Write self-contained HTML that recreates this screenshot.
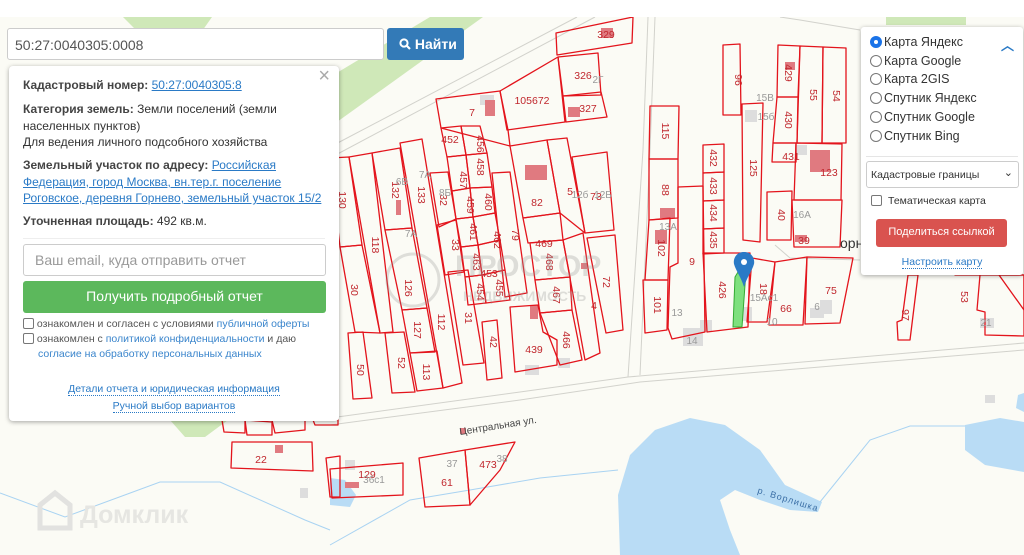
<!DOCTYPE html>
<html><head><meta charset="utf-8"><style>
*{box-sizing:border-box;margin:0;padding:0}
body{width:1024px;height:555px;overflow:hidden;position:relative;background:#fbfbf5;font-family:"Liberation Sans",sans-serif;color:#333}
#map{position:absolute;left:0;top:0}
.top{position:absolute;left:0;top:0;width:1024px;height:17px;background:#fff}
.search{position:absolute;left:7px;top:28px;width:377px;height:32px;border:1px solid #ccc;border-radius:3px;background:#fff;font-size:14px;padding:8px 7px;color:#555}
.btn{position:absolute;left:387px;top:28px;width:77px;height:32px;background:#337ab7;border-radius:3px;color:#fff;font-size:14px;font-weight:bold;padding:8px 0 0 12px}
.panel{position:absolute;left:9px;top:66px;width:330px;height:355px;background:#fff;border-radius:4px;box-shadow:0 1px 5px rgba(0,0,0,.35);font-size:12px;line-height:16.5px}
.panel b{color:#444}
.panel a{color:#2a7ac6}
.p{position:absolute;left:14px}
.rp{position:absolute;left:861px;top:27px;width:162px;height:248px;background:#fff;border-radius:3px;box-shadow:0 1px 5px rgba(0,0,0,.35);font-size:12.5px}
.r{position:absolute;left:9px;display:flex;align-items:center;color:#333}
.r i{width:12px;height:12px;border:1px solid #777;border-radius:50%;display:inline-block;margin-right:2px}
.lab{font-size:10.5px;fill:#c0272d;font-family:"Liberation Sans",sans-serif}
.gl{font-size:10px;fill:#999;font-family:"Liberation Sans",sans-serif}
</style></head><body>
<svg id="map" width="1024" height="555" viewBox="0 0 1024 555">
<g fill="#cfe8b8">
<polygon points="123,17 212,17 200,34 140,34"/>
<polygon points="330,77 430,17 483,17 330,127"/>
<polygon points="886,17 966,17 966,25 886,25"/>
<polygon points="170,420 228,420 205,437 185,437"/>
</g>
<g fill="#b9dcf5">
<path d="M620,555 L618,495 L630,455 L655,430 L690,418 L725,425 L760,450 L785,485 L822,502 L818,512 L790,510 L760,500 L735,490 L720,500 L730,530 L740,555Z"/>
<path d="M965,425 L1000,418 L1024,422 L1024,472 L985,465 L965,450Z"/>
<path d="M1018,395 L1024,393 L1024,412 L1016,408Z"/>
<path d="M330,478 L345,480 L356,495 L350,507 L330,505Z"/>
</g>
<g fill="none" stroke="#a9d3f2" stroke-width="1">
<path d="M0,493 L65,517 L160,482 L220,482 L305,520 L330,530"/>
<path d="M820,502 L870,440 L910,426 L965,426"/>
<path d="M330,545 L410,500 L470,490 L540,478 L618,470"/>
</g>
<g fill="none" stroke="#d2d2cc" stroke-width="1">
<path d="M330,147 L577,17"/><path d="M330,158 L595,17"/>
<path d="M655,17 L650,150 L640,375"/><path d="M648,17 L643,150 L628,377"/>
<path d="M330,418 L520,392 L628,377 L1024,343"/>
<path d="M330,425 L520,400 L640,382 L1024,350"/>
<path d="M780,17 L800,20 L860,30"/>
<path d="M775,245 L790,258 L860,260"/>
</g>
<g fill="#ddd">
<rect x="480" y="95" width="14" height="10"/><rect x="745" y="110" width="12" height="12"/><rect x="795" y="145" width="12" height="10"/>
<rect x="683" y="328" width="20" height="18"/><rect x="810" y="308" width="14" height="10"/><rect x="700" y="320" width="12" height="12"/>
<rect x="820" y="300" width="12" height="14"/><rect x="525" y="365" width="14" height="10"/><rect x="558" y="358" width="12" height="10"/>
<rect x="345" y="460" width="10" height="10"/><rect x="985" y="395" width="10" height="8"/><rect x="300" y="488" width="8" height="10"/>
<rect x="980" y="318" width="14" height="10"/><rect x="740" y="307" width="12" height="14"/>
</g>
<g fill="#e07a80">
<rect x="485" y="100" width="10" height="16"/><rect x="525" y="165" width="22" height="15"/><rect x="568" y="107" width="12" height="10"/>
<rect x="660" y="208" width="15" height="10"/><rect x="655" y="230" width="12" height="14"/><rect x="810" y="150" width="20" height="22"/>
<rect x="795" y="235" width="12" height="7"/><rect x="396" y="200" width="5" height="15"/><rect x="530" y="305" width="8" height="14"/>
<rect x="601" y="28" width="12" height="10"/><rect x="345" y="482" width="14" height="6"/><rect x="460" y="428" width="6" height="6"/>
<rect x="275" y="445" width="8" height="8"/><rect x="581" y="263" width="6" height="6"/><rect x="785" y="62" width="10" height="8"/>
</g>
<g fill="none" stroke="#e3141c" stroke-width="1.3" stroke-linejoin="round">
<polygon points="556,33 633,17 632,43 557,55"/>
<polygon points="558,57 598,53 601,95 563,96"/>
<polygon points="563,96 601,92 607,117 566,122"/>
<polygon points="500,91 558,57 565,122 507,130"/>
<polygon points="436,99 500,91 508,130 510,146 441,128"/>
<polygon points="441,128 461,126 466,155 447,157"/>
<polygon points="461,126 480,126 487,153 466,155"/>
<polygon points="447,157 466,155 470,188 452,191"/>
<polygon points="466,155 487,153 492,187 470,188"/>
<polygon points="452,191 470,188 473,217 456,219"/>
<polygon points="470,188 492,187 495,213 473,217"/>
<polygon points="456,219 473,217 478,245 461,247"/>
<polygon points="473,217 495,213 500,240 478,245"/>
<polygon points="461,247 478,245 482,275 465,277"/>
<polygon points="478,245 500,240 505,270 482,275"/>
<polygon points="465,277 482,275 486,303 468,305"/>
<polygon points="482,275 505,270 510,300 486,303"/>
<polygon points="430,173 448,172 456,219 439,227"/>
<polygon points="437,225 456,220 464,272 445,275"/>
<polygon points="448,272 468,270 484,363 463,365"/>
<polygon points="482,322 497,320 502,378 487,380"/>
<polygon points="510,146 547,140 560,213 523,218"/>
<polygon points="523,218 560,213 563,240 528,243"/>
<polygon points="492,173 510,172 527,293 505,297"/>
<polygon points="530,243 563,240 570,277 535,280"/>
<polygon points="535,280 570,277 572,310 540,313"/>
<polygon points="540,313 572,310 582,360 560,365"/>
<polygon points="510,307 538,305 543,332 557,340 557,365 515,372"/>
<polygon points="547,140 567,138 585,233 560,213"/>
<polygon points="572,157 607,152 614,230 585,233"/>
<polygon points="563,240 583,233 600,353 585,360"/>
<polygon points="587,238 615,235 623,330 606,333"/>
<polygon points="330,158 349,157 362,245 340,247"/>
<polygon points="349,157 372,153 393,332 380,333"/>
<polygon points="340,247 362,245 380,333 355,332"/>
<polygon points="348,333 363,332 372,398 353,399"/>
<polygon points="372,153 400,148 412,228 385,230"/>
<polygon points="385,230 412,228 427,308 402,310"/>
<polygon points="402,310 427,308 435,352 410,353"/>
<polygon points="385,333 404,332 415,392 392,393"/>
<polygon points="410,353 437,351 443,388 417,391"/>
<polygon points="400,143 422,139 462,383 443,388"/>
<polygon points="650,106 679,106 678,159 649,159"/>
<polygon points="649,159 678,159 678,218 649,220"/>
<polygon points="649,220 670,218 668,280 645,280"/>
<polygon points="643,280 668,280 667,330 645,333"/>
<polygon points="678,187 703,186 705,332 672,339 668,328 670,267 678,263"/>
<polygon points="703,145 724,144 724,172 703,173"/>
<polygon points="703,173 724,172 724,200 703,201"/>
<polygon points="703,201 724,200 724,228 703,229"/>
<polygon points="703,229 724,228 724,253 703,254"/>
<polygon points="703,253 750,253 748,327 707,332"/>
<polygon points="723,45 740,44 741,115 723,115"/>
<polygon points="742,104 763,103 760,242 743,240"/>
<polygon points="752,258 775,262 767,322 747,322"/>
<polygon points="775,262 807,257 803,325 769,325"/>
<polygon points="807,257 853,258 840,323 805,324"/>
<polygon points="778,45 800,46 798,97 777,97"/>
<polygon points="800,46 823,47 822,143 797,143"/>
<polygon points="823,47 846,48 846,143 822,143"/>
<polygon points="777,97 798,97 797,143 773,143"/>
<polygon points="773,143 796,143 796,162 772,162"/>
<polygon points="796,143 842,144 841,200 794,200"/>
<polygon points="767,192 792,191 791,240 767,240"/>
<polygon points="792,200 842,200 840,247 794,247"/>
<polygon points="908,275 918,275 910,340 898,340 897,322 902,320"/>
<polygon points="955,275 980,275 977,310 985,312 985,335 1024,336 1024,275"/>
<polygon points="999,275 1024,275 1024,310"/>
<polygon points="232,442 312,442 313,471 231,468"/>
<polygon points="330,469 403,463 403,495 332,498"/>
<polygon points="419,458 465,450 470,505 425,507"/>
<polygon points="465,450 515,442 500,470 470,505"/>
<polygon points="222,420 245,420 245,433 224,432"/>
<polygon points="245,420 272,422 272,435 247,435"/>
<polygon points="272,420 305,420 305,430 275,433"/>
<polygon points="313,420 338,420 338,425 315,425"/>
<polygon points="326,458 340,456 340,497 330,497"/>
</g>
<polygon points="735,277 747,257 742,327 733,327" fill="#7ee07e" stroke="#3a3" stroke-width="1"/>
<path d="M744,252 C736,252 733,259 734,264 C736,271 741,277 744,287 C747,277 752,271 754,264 C755,259 752,252 744,252Z" fill="#2a7ac6"/>
<circle cx="744" cy="262" r="3" fill="#fff"/>
<g class="lab" text-anchor="middle">
<text x="606" y="38">329</text><text x="583" y="79">326</text><text x="588" y="112">327</text><text x="532" y="104">105672</text><text x="472" y="116">7</text>
<text x="537" y="206">82</text><text x="544" y="247">469</text><text x="570" y="195">5</text><text x="596" y="200">73</text>
<text x="594" y="309">4</text><text x="534" y="353">439</text><text x="692" y="265">9</text><text x="829" y="176">123</text>
<text x="489" y="277">453</text><text x="831" y="294">75</text><text x="786" y="312">66</text>
<text x="261" y="463">22</text><text x="367" y="478">129</text><text x="447" y="486">61</text><text x="488" y="468">473</text>
<text x="450" y="143">452</text><text x="791" y="160">431</text><text x="804" y="244">39</text>
</g>
<g class="lab" text-anchor="middle">
<text transform="translate(339,200) rotate(90)">130</text><text transform="translate(372,245) rotate(90)">118</text>
<text transform="translate(351,290) rotate(90)">30</text><text transform="translate(392,190) rotate(90)">132</text>
<text transform="translate(418,195) rotate(90)">133</text><text transform="translate(405,288) rotate(90)">126</text>
<text transform="translate(414,330) rotate(90)">127</text><text transform="translate(398,363) rotate(90)">52</text>
<text transform="translate(423,372) rotate(90)">113</text><text transform="translate(438,322) rotate(90)">112</text>
<text transform="translate(440,200) rotate(90)">32</text><text transform="translate(452,245) rotate(90)">33</text>
<text transform="translate(465,318) rotate(90)">31</text><text transform="translate(490,342) rotate(90)">42</text>
<text transform="translate(357,370) rotate(90)">50</text><text transform="translate(494,240) rotate(90)">462</text>
<text transform="translate(460,180) rotate(90)">457</text><text transform="translate(477,167) rotate(90)">458</text>
<text transform="translate(467,205) rotate(90)">459</text><text transform="translate(485,202) rotate(90)">460</text>
<text transform="translate(470,232) rotate(90)">461</text><text transform="translate(477,144) rotate(90)">456</text>
<text transform="translate(473,262) rotate(90)">463</text><text transform="translate(477,292) rotate(90)">454</text>
<text transform="translate(496,288) rotate(90)">455</text><text transform="translate(512,235) rotate(90)">79</text>
<text transform="translate(546,262) rotate(90)">468</text><text transform="translate(553,295) rotate(90)">467</text>
<text transform="translate(563,340) rotate(90)">466</text><text transform="translate(603,282) rotate(90)">72</text>
<text transform="translate(662,131) rotate(90)">115</text><text transform="translate(662,190) rotate(90)">88</text>
<text transform="translate(658,248) rotate(90)">102</text><text transform="translate(654,305) rotate(90)">101</text>
<text transform="translate(710,158) rotate(90)">432</text><text transform="translate(710,186) rotate(90)">433</text>
<text transform="translate(710,213) rotate(90)">434</text><text transform="translate(710,240) rotate(90)">435</text>
<text transform="translate(719,290) rotate(90)">426</text><text transform="translate(735,80) rotate(90)">96</text>
<text transform="translate(750,168) rotate(90)">125</text><text transform="translate(760,289) rotate(90)">18</text>
<text transform="translate(785,73) rotate(90)">429</text><text transform="translate(810,95) rotate(90)">55</text>
<text transform="translate(833,96) rotate(90)">54</text><text transform="translate(785,120) rotate(90)">430</text>
<text transform="translate(778,215) rotate(90)">40</text><text transform="translate(902,315) rotate(90)">97</text>
<text transform="translate(961,297) rotate(90)">53</text>
</g>
<g class="gl" text-anchor="middle">
<text x="402" y="185">6В</text><text x="425" y="178">7А</text><text x="445" y="196">8Б</text><text x="411" y="237">7А</text>
<text x="765" y="101">15В</text><text x="766" y="120">15б</text><text x="802" y="218">16А</text><text x="764" y="301">15Ас1</text>
<text x="772" y="325">10</text><text x="692" y="344">14</text><text x="677" y="316">13</text><text x="603" y="198">12Б</text>
<text x="580" y="198">12б</text><text x="374" y="483">36с1</text><text x="452" y="467">37</text><text x="502" y="462">38</text>
<text x="668" y="230">13А</text><text x="598" y="83">2Г</text><text x="986" y="326">21</text><text x="817" y="310">6</text>
</g>
<text x="840" y="248" font-size="14" fill="#333" font-family="Liberation Sans,sans-serif">орне</text>
<text transform="translate(460,435) rotate(-9)" font-size="10" fill="#444" font-family="Liberation Sans,sans-serif">Центральная ул.</text>
<text transform="translate(757,493) rotate(17)" font-size="9" fill="#3a6ea5" font-family="Liberation Sans,sans-serif" letter-spacing="1">р. Ворлишка</text>
<g opacity="0.25" fill="none" stroke="#888" stroke-width="3">
<circle cx="413" cy="280" r="26"/>
</g>
<text x="455" y="276" font-size="30" fill="#999" opacity="0.3" font-family="Liberation Sans,sans-serif" font-weight="bold">ПРОСТОР</text>
<text x="463" y="301" font-size="14" fill="#999" opacity="0.3" font-family="Liberation Sans,sans-serif" font-weight="bold">НЕДВИЖИМОСТЬ</text>
<path d="M40,528 L40,505 L55,493 L70,505 L70,528Z" fill="none" stroke="#e2e2e0" stroke-width="5"/>
<text x="80" y="523" font-size="25" fill="#e6e6e2" font-family="Liberation Sans,sans-serif" font-weight="bold">Домклик</text>
</svg>
<div class="top"></div>
<div class="search">50:27:0040305:0008</div>
<div class="btn"><svg width="12" height="12" viewBox="0 0 12 12" style="vertical-align:-1px"><circle cx="5" cy="5" r="3.6" fill="none" stroke="#fff" stroke-width="2"/><path d="M7.5,7.5 L11,11" stroke="#fff" stroke-width="2.2"/></svg> Найти</div>
<div class="panel">
<div style="position:absolute;right:9px;top:2px;font-size:20px;color:#aaa">×</div>
<div class="p" style="top:11px"><b>Кадастровый номер:</b> <a href="#" style="text-decoration:underline">50:27:0040305:8</a></div>
<div class="p" style="top:35px;width:290px"><b>Категория земель:</b> Земли поселений (земли населенных пунктов)<br>Для ведения личного подсобного хозяйства</div>
<div class="p" style="top:91px;width:300px"><b>Земельный участок по адресу:</b> <a href="#" style="text-decoration:underline">Российская Федерация, город Москва, вн.тер.г. поселение Роговское, деревня Горнево, земельный участок 15/2</a></div>
<div class="p" style="top:147px"><b>Уточненная площадь:</b> 492 кв.м.</div>
<div class="p" style="top:172px;width:302px;border-top:1px solid #eee"></div>
<div class="p" style="top:178px;width:303px;height:32px;border:1px solid #ccc;border-radius:3px;font-size:14px;color:#999;padding:7px 11px">Ваш email, куда отправить отчет</div>
<div class="p" style="top:215px;width:303px;height:32px;background:#5cb85c;border-radius:3px;color:#fff;font-size:14px;text-align:center;padding-top:7px">Получить подробный отчет</div>
<div class="p" style="top:251px;font-size:10.5px;line-height:15px;color:#555"><span style="display:inline-block;width:11px;height:11px;border:1px solid #777;border-radius:2px;vertical-align:-2px"></span> ознакомлен и согласен с условиями <span style="color:#3a85cc">публичной оферты</span><br><span style="display:inline-block;width:11px;height:11px;border:1px solid #777;border-radius:2px;vertical-align:-2px"></span> ознакомлен с <span style="color:#3a85cc">политикой конфиденциальности</span> и даю<br><span style="padding-left:15px;color:#3a85cc">согласие на обработку персональных данных</span></div>
<div style="position:absolute;left:0;width:330px;top:315px;text-align:center;font-size:10.5px;line-height:17px;color:#2a7ac6"><span style="border-bottom:1px dotted #2a7ac6">Детали отчета и юридическая информация</span><br><span style="border-bottom:1px dotted #2a7ac6">Ручной выбор вариантов</span></div>
</div>
<div class="rp">
<div class="r" style="top:8px"><i style="border:4px solid #1a73e8;background:#fff"></i>Карта Яндекс</div>
<div style="position:absolute;right:9px;top:8px;color:#2a7ac6;font-size:13px;font-weight:bold">︿</div>
<div class="r" style="top:27px"><i></i>Карта Google</div>
<div class="r" style="top:45px"><i></i>Карта 2GIS</div>
<div class="r" style="top:64px"><i></i>Спутник Яндекс</div>
<div class="r" style="top:83px"><i></i>Спутник Google</div>
<div class="r" style="top:102px"><i></i>Спутник Bing</div>
<div style="position:absolute;left:5px;right:5px;top:129px;border-top:1px solid #e5e5e5"></div>
<div style="position:absolute;left:5px;top:134px;width:153px;height:27px;border:1px solid #ccc;border-radius:3px;font-size:10.5px;padding:7px 4px;color:#333">Кадастровые границы<span style="position:absolute;right:5px;top:4px;font-size:11px">⌄</span></div>
<div style="position:absolute;left:10px;top:168px;font-size:10.5px;color:#333"><span style="display:inline-block;width:11px;height:11px;border:1px solid #777;border-radius:2px;vertical-align:-2px;margin-right:6px"></span>Тематическая карта</div>
<div style="position:absolute;left:15px;top:192px;width:131px;height:28px;background:#d9534f;border-radius:3px;color:#fff;font-size:11px;text-align:center;padding-top:7px">Поделиться ссылкой</div>
<div style="position:absolute;left:0;width:162px;top:229px;text-align:center;font-size:10.5px;color:#2a7ac6"><span style="border-bottom:1px dotted #2a7ac6">Настроить карту</span></div>
</div>
</body></html>
